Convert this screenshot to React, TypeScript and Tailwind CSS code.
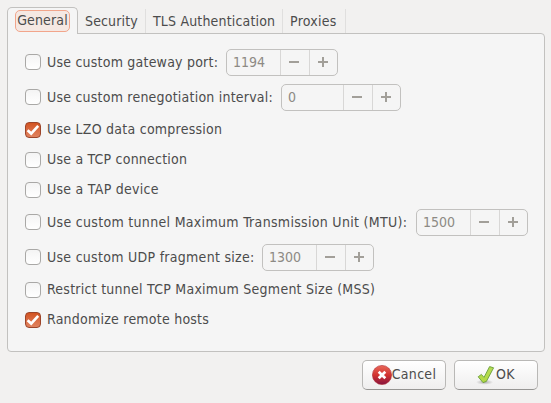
import React from "react";

function Check({ on }: { on?: boolean }) {
  return (
    <span
      className={
        "flex h-4 w-4 shrink-0 items-center justify-center rounded-[4px] border " +
        (on
          ? "border-[#9c452a] bg-gradient-to-b from-[#d2531f] to-[#e0835f]"
          : "border-[#a9a8a6] bg-gradient-to-b from-[#f4f4f4] to-white")
      }
    >
      {on && (
        <svg viewBox="0 0 14 14" className="h-[14px] w-[14px] shrink-0" fill="none">
          <path d="M1.6 7.2 L5.2 10.6 L12.2 2.8" stroke="#fff" strokeWidth="2.7" />
        </svg>
      )}
    </span>
  );
}

function Spin({ value, field }: { value: string; field: string }) {
  return (
    <div className="ml-2 flex h-[27px] shrink-0 rounded-[5px] border border-[#c2c1bf] text-[#8d8a84]">
      <div className={"flex items-center pb-[2px] pl-[6px] " + field}>{value}</div>
      <div className="flex w-[29px] items-center justify-center border-l border-[#d8d7d6] pb-px pr-[2px]">
        <svg viewBox="0 0 10 10" className="h-[10px] w-[10px]">
          <path d="M0 4h10v2H0z" fill="#a29f99" />
        </svg>
      </div>
      <div className="flex w-[28px] items-center justify-center border-l border-[#d8d7d6] pb-px pr-px">
        <svg viewBox="0 0 10 10" className="h-[10px] w-[10px]">
          <path d="M0 4h10v2H0zM4 0h2v10H4z" fill="#a29f99" />
        </svg>
      </div>
    </div>
  );
}

type Row = { label: string; cls: string; on?: boolean; value?: string; field?: string };

const rows: Row[] = [
  { label: "Use custom gateway port:", cls: "w-[171px] tracking-[0.22px]", value: "1194", field: "w-[53px]" },
  { label: "Use custom renegotiation interval:", cls: "w-[226px] tracking-[0.22px]", value: "0", field: "w-[61px]" },
  { label: "Use LZO data compression", cls: "pb-[2px] tracking-[0.25px]", on: true },
  { label: "Use a TCP connection", cls: "pb-[2px] tracking-[0.21px]" },
  { label: "Use a TAP device", cls: "pb-[2px] tracking-[0.27px]" },
  { label: "Use custom tunnel Maximum Transmission Unit (MTU):", cls: "w-[361px] tracking-[0.31px]", value: "1500", field: "w-[53px]" },
  { label: "Use custom UDP fragment size:", cls: "w-[207px] tracking-[0.28px]", value: "1300", field: "w-[53px]" },
  { label: "Restrict tunnel TCP Maximum Segment Size (MSS)", cls: "pb-[2px] tracking-[0.25px]" },
  { label: "Randomize remote hosts", cls: "pb-[2px] tracking-[0.23px]", on: true },
];

const tabs = [
  { label: "Security", cls: "w-[68px] tracking-[0.15px]" },
  { label: "TLS Authentication", cls: "w-[137px] tracking-[0.17px]" },
  { label: "Proxies", cls: "w-[63px] tracking-[0.28px]" },
];

const button =
  "flex h-[30px] w-[84px] items-center justify-center rounded-[5px] border border-[#b9b8b6] border-b-[#969593] bg-gradient-to-b from-white to-[#efeeee]";

export default function App() {
  return (
    <div className="flex h-[403px] w-[551px] flex-col overflow-hidden whitespace-nowrap bg-[#f2f1f0] pl-[7px] pt-[7px] font-['DejaVu_Sans_Condensed','DejaVu_Sans',sans-serif] text-[14px] leading-[16px] text-[#4c4c4c] [font-stretch:condensed]">
      <div className="relative z-10 flex h-[27px] items-end">
        <div className="flex h-[27px] w-[71px] items-start rounded-t-[5px] border border-b-0 border-[#c2c1bf] bg-[#f5f5f5] pl-[7px] pt-[2px]">
          <div className="flex h-[22px] w-[55px] items-center justify-center rounded-[5px] border border-[#f2a58b] bg-[#f5e8e3] pb-[2px] tracking-[0.15px]">
            General
          </div>
        </div>
        {tabs.map((t) => (
          <div
            key={t.label}
            className={
              "mb-px flex h-[24px] items-center border-r border-[#e0dfde] pb-px pl-[7px] " + t.cls
            }
          >
            {t.label}
          </div>
        ))}
      </div>
      <div className="-mt-px flex h-[319px] w-[538px] flex-col gap-2 rounded-b-[4px] rounded-tr-[4px] border border-[#c2c1bf] bg-[#f5f5f5] pl-[17px] pt-[15px]">
        {rows.map((r) => (
          <div key={r.label} className={"flex " + (r.value ? "h-[27px]" : "h-[22px]")}>
            <div className={"flex items-center " + (r.value ? "h-[26px]" : "h-[22px]")}>
              <Check on={r.on} />
              <span className={"ml-[6px] shrink-0 " + r.cls}>{r.label}</span>
            </div>
            {r.value && <Spin value={r.value} field={r.field ?? ""} />}
          </div>
        ))}
      </div>
      <div className="mt-2 flex gap-2 pl-[355px]">
        <div className={button}>
          <svg viewBox="0 0 20 20" className="h-5 w-5 shrink-0">
            <defs>
              <linearGradient id="red" x1="0" y1="0" x2="0" y2="1">
                <stop offset="0" stopColor="#e8695a" />
                <stop offset="0.5" stopColor="#d3332f" />
                <stop offset="1" stopColor="#86143f" />
              </linearGradient>
            </defs>
            <circle cx="10" cy="10" r="9.6" fill="url(#red)" stroke="#b02a32" strokeWidth="0.6" />
            <path d="M6.7 6.7 L13.3 13.3 M13.3 6.7 L6.7 13.3" stroke="#fff" strokeWidth="2.7" />
          </svg>
          <span className="pb-[2px] tracking-[0.3px]">Cancel</span>
        </div>
        <div className={button + " pr-px"}>
          <svg viewBox="0 0 20 20" className="h-5 w-5 shrink-0">
            <defs>
              <linearGradient id="green" x1="0" y1="0" x2="0" y2="1">
                <stop offset="0" stopColor="#b5dc55" />
                <stop offset="1" stopColor="#b4d943" />
              </linearGradient>
              <radialGradient id="shade">
                <stop offset="0" stopColor="#000" stopOpacity="0.28" />
                <stop offset="1" stopColor="#000" stopOpacity="0" />
              </radialGradient>
            </defs>
            <ellipse cx="8.6" cy="17.2" rx="8.6" ry="2.6" fill="url(#shade)" />
            <path
              d="M2.2 11.8 L5.4 9.4 L8 12.4 L13.6 1.6 L17.6 2.8 L10.4 16.4 L7 17.6 Z"
              fill="url(#green)"
              stroke="#6a9e3a"
              strokeWidth="0.9"
              strokeLinejoin="round"
            />
          </svg>
          <span className="pb-[2px] tracking-[0.4px]">OK</span>
        </div>
      </div>
    </div>
  );
}
